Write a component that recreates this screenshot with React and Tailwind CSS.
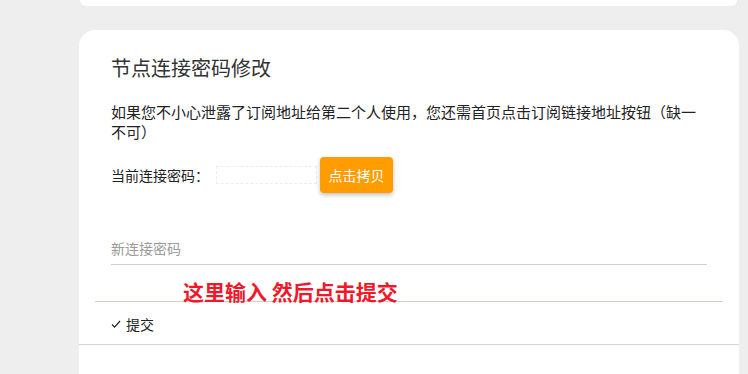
import React from 'react'

const font = { fontFamily: '"Noto Sans CJK SC", "Noto Sans", sans-serif' }

export default function App() {
  return (
    <div className="relative w-[748px] h-[374px] overflow-hidden bg-[#eeeeee]" style={font}>
      {/* previous card, only its bottom edge is visible */}
      <div className="ml-[80px] w-[657px] h-[6px] rounded-b-2xl bg-white" />

      {/* password card */}
      <div className="ml-[79px] mt-[24px] w-[660px] h-[400px] rounded-t-2xl bg-white">
        <div className="px-8 pt-[26px]">
          <h2 className="text-[20px] leading-[24px] text-[#333] font-normal">节点连接密码修改</h2>
          <p className="mt-[22px] w-[610px] text-[15px] leading-[20px] text-[#222]">
            如果您不小心泄露了订阅地址给第二个人使用，您还需首页点击订阅链接地址按钮（缺一
            <br />
            不可）
          </p>

          <div className="mt-[15px] flex items-center h-9">
            <span className="text-[14px] text-[#222]">当前连接密码：</span>
            <input
              readOnly
              className="ml-[7px] w-[101px] h-[18px] border border-dashed border-[#ececec] outline-none"
            />
            <button className="ml-[3px] h-9 w-[73px] rounded-[4px] bg-[#ff9c00] text-white text-[14px] shadow-[0_2px_4px_rgba(0,0,0,0.25)]">
              点击拷贝
            </button>
          </div>

          <div className="mt-[42px] h-[30px] border-b border-[#d0d0d0] flex items-start pt-[4px]">
            <input
              placeholder="新连接密码"
              className="w-full text-[14px] leading-[18px] outline-none placeholder:text-[#9a9a9a]"
            />
          </div>
        </div>

        <div className="mx-4 mt-[36px] h-px bg-[#cad3ca]" />

        <div className="h-[42px] px-8 pt-[2px] flex items-center gap-[5px] text-[14px] text-[#222]">
          <svg width="10" height="10" viewBox="0 0 10 10" fill="none" stroke="#222" strokeWidth="1.2">
            <path d="M1 5.5l2.6 2.6L9 2" />
          </svg>
          <span>提交</span>
        </div>

        <div className="border-t border-[#d4d4d4]" />
      </div>

      {/* annotation */}
      <div className="absolute left-[183px] top-[278px] text-[21px] leading-[26px] font-bold text-[#f0182a]">
        这里输入 然后点击提交
      </div>
    </div>
  )
}
